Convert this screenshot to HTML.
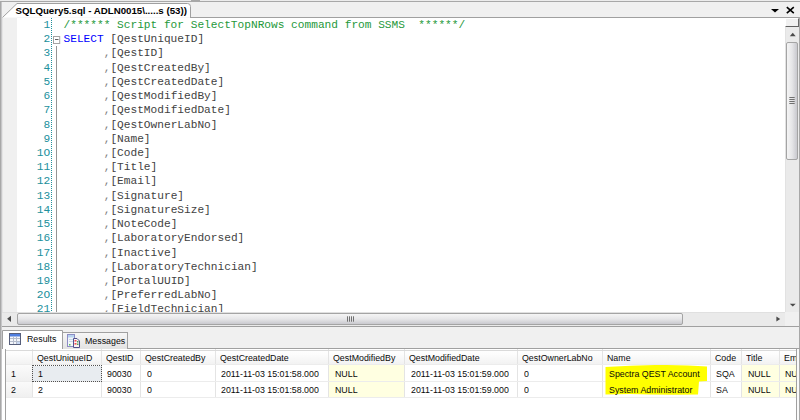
<!DOCTYPE html>
<html><head><meta charset="utf-8">
<style>
*{margin:0;padding:0;box-sizing:border-box}
html,body{width:800px;height:420px;overflow:hidden;background:#f0f0f0;position:relative}
.a{position:absolute}
.ui{font-family:"Liberation Sans",sans-serif}
.mono{font-family:"Liberation Mono",monospace}
#editor{left:2px;top:18px;width:784px;height:294px;background:#fff;overflow:hidden}
#selmargin{left:1px;top:0;width:14px;height:294px;background:#f0f0f0}
.ln{font-family:"Liberation Mono",monospace;position:absolute;left:0;width:48.2px;text-align:right;color:#21909c;font-size:11.17px;white-space:pre}
.code{font-family:"Liberation Mono",monospace;position:absolute;left:61.5px;font-size:11.17px;white-space:pre;color:#424242}
.gt{font-family:"Liberation Sans",sans-serif;font-size:9.6px;line-height:11px;color:#0a0a0a;white-space:pre;transform:scaleX(.92);transform-origin:0 0}
.cm{color:#24983a}.kw{color:#0000ff}.op{color:#808080}
</style></head><body>
<!-- top border -->
<div class="a" style="left:0;top:0;width:800px;height:1px;background:#ececec"></div>
<div class="a" style="left:191px;top:0;width:9px;height:1px;background:#a8a8a8"></div>
<div class="a" style="left:0;top:1px;width:800px;height:1px;background:#a8a8a8"></div>
<!-- left window border -->
<div class="a" style="left:2px;top:348px;width:3px;height:72px;background:#fff"></div>
<div class="a" style="left:797px;top:349px;width:2px;height:71px;background:#fafafa"></div>
<!-- tab strip -->
<svg class="a" style="left:0;top:0" width="800" height="18">
  <path d="M2.5 17.5 L17 3.5 L187.5 3.5 Q190.5 3.5 190.5 6.5 L190.5 17.5" fill="#fff" stroke="#a0a0a0" stroke-width="1"/>
  <line x1="190" y1="17.5" x2="800" y2="17.5" stroke="#a0a0a0" stroke-width="1"/>
  <path d="M771 9 L779 9 L775 12.5 Z" fill="#000"/>
  <path d="M786.8 7.2 L793.8 13.2 M793.8 7.2 L786.8 13.2" stroke="#000" stroke-width="1.6"/>
</svg>
<div class="a ui" style="left:15.5px;top:3.5px;font-size:9.7px;font-weight:bold;color:#000;white-space:pre;line-height:14px">SQLQuery5.sql - ADLN0015\.....s (53))</div>

<div id="editor" class="a">
  <div id="selmargin" class="a"></div>
  <div class="a" style="left:49px;top:0;width:1px;height:294px;background-image:linear-gradient(#21909c 50%,transparent 50%);background-size:1px 2px"></div>
  <svg class="a" style="left:50px;top:17px" width="12" height="12"><rect x="1.5" y="1.5" width="6.2" height="7" fill="#fff" stroke="#a4a4a4"/><line x1="3" y1="4.5" x2="6.5" y2="4.5" stroke="#606060"/></svg>
  <div class="a" style="left:54px;top:28px;width:1px;height:266px;background:#959595"></div>
  <div class="a" style="left:0;top:1px;width:784px;height:294px">
<div class="ln" style="top:0.00px">1</div>
<div class="code" style="top:0.00px"><span class="cm">/****** Script for SelectTopNRows command from SSMS  ******/</span></div>
<div class="ln" style="top:14.22px">2</div>
<div class="code" style="top:14.22px"><span class="kw">SELECT</span> [QestUniqueID]</div>
<div class="ln" style="top:28.44px">3</div>
<div class="code" style="top:28.44px">      <span class="op">,</span>[QestID]</div>
<div class="ln" style="top:42.66px">4</div>
<div class="code" style="top:42.66px">      <span class="op">,</span>[QestCreatedBy]</div>
<div class="ln" style="top:56.88px">5</div>
<div class="code" style="top:56.88px">      <span class="op">,</span>[QestCreatedDate]</div>
<div class="ln" style="top:71.10px">6</div>
<div class="code" style="top:71.10px">      <span class="op">,</span>[QestModifiedBy]</div>
<div class="ln" style="top:85.32px">7</div>
<div class="code" style="top:85.32px">      <span class="op">,</span>[QestModifiedDate]</div>
<div class="ln" style="top:99.54px">8</div>
<div class="code" style="top:99.54px">      <span class="op">,</span>[QestOwnerLabNo]</div>
<div class="ln" style="top:113.76px">9</div>
<div class="code" style="top:113.76px">      <span class="op">,</span>[Name]</div>
<div class="ln" style="top:127.98px">1O</div>
<div class="code" style="top:127.98px">      <span class="op">,</span>[Code]</div>
<div class="ln" style="top:142.20px">11</div>
<div class="code" style="top:142.20px">      <span class="op">,</span>[Title]</div>
<div class="ln" style="top:156.42px">12</div>
<div class="code" style="top:156.42px">      <span class="op">,</span>[Email]</div>
<div class="ln" style="top:170.64px">13</div>
<div class="code" style="top:170.64px">      <span class="op">,</span>[Signature]</div>
<div class="ln" style="top:184.86px">14</div>
<div class="code" style="top:184.86px">      <span class="op">,</span>[SignatureSize]</div>
<div class="ln" style="top:199.08px">15</div>
<div class="code" style="top:199.08px">      <span class="op">,</span>[NoteCode]</div>
<div class="ln" style="top:213.30px">16</div>
<div class="code" style="top:213.30px">      <span class="op">,</span>[LaboratoryEndorsed]</div>
<div class="ln" style="top:227.52px">17</div>
<div class="code" style="top:227.52px">      <span class="op">,</span>[Inactive]</div>
<div class="ln" style="top:241.74px">18</div>
<div class="code" style="top:241.74px">      <span class="op">,</span>[LaboratoryTechnician]</div>
<div class="ln" style="top:255.96px">19</div>
<div class="code" style="top:255.96px">      <span class="op">,</span>[PortalUUID]</div>
<div class="ln" style="top:270.18px">2O</div>
<div class="code" style="top:270.18px">      <span class="op">,</span>[PreferredLabNo]</div>
<div class="ln" style="top:284.40px">21</div>
<div class="code" style="top:284.40px">      <span class="op">,</span>[FieldTechnician]</div>
  </div>
</div>


<!-- right border -->
<div class="a" style="left:799px;top:17px;width:1px;height:403px;background:#a8a8a8"></div>
<!-- vertical scrollbar -->
<div class="a" style="left:785px;top:18px;width:14px;height:294px;background:#eaeaea;border-left:1px solid #e2e2e2"></div>
<div class="a" style="left:785px;top:18px;width:14px;height:9px;background:#f0f0f0;border-top:1px solid #fff;border-left:1px solid #fff;border-right:1px solid #686868;border-bottom:1px solid #606060"></div>
<svg class="a" style="left:785px;top:27px" width="14" height="285">
  <path d="M4.8 9.2 L10.7 9.2 L7.75 5.8 Z" fill="#4a4a4a"/>
  <rect x="1.5" y="15.5" width="11" height="117" rx="1.5" fill="url(#vth)" stroke="#a4a4a4"/>
  <path d="M4.3 70.5 H9.7 M4.3 72.5 H9.7 M4.3 74.5 H9.7 M4.3 76.5 H9.7" stroke="#707070" stroke-width="1"/>
  <path d="M4.8 276.7 L10.7 276.7 L7.75 279.4 Z" fill="#4a4a4a"/>
  <defs><linearGradient id="vth" x1="0" x2="1" y1="0" y2="0"><stop offset="0" stop-color="#f6f6f6"/><stop offset="0.5" stop-color="#e6e6e8"/><stop offset="1" stop-color="#c6c6cc"/></linearGradient>
  <linearGradient id="hth" x1="0" x2="0" y1="0" y2="1"><stop offset="0" stop-color="#f6f6f6"/><stop offset="0.5" stop-color="#e6e6e8"/><stop offset="1" stop-color="#c6c6cc"/></linearGradient>
  <linearGradient id="msg" x1="0" x2="0" y1="0" y2="1"><stop offset="0" stop-color="#f7f7f7"/><stop offset="1" stop-color="#e2e2e2"/></linearGradient></defs>
</svg>
<!-- horizontal scrollbar -->
<div class="a" style="left:2px;top:312px;width:783px;height:14px;background:#eaeaea;border-top:1px solid #e0e0e0"></div>
<svg class="a" style="left:2px;top:312px" width="783" height="14">
  <path d="M5.1 6.8 L9 3.7 L9 9.9 Z" fill="#4a4a4a"/>
  <rect x="15.5" y="1.5" width="665" height="11" rx="1.5" fill="url(#hth)" stroke="#a4a4a4"/>
  <path d="M345.5 4.3 V9.7 M347.5 4.3 V9.7 M349.5 4.3 V9.7 M351.5 4.3 V9.7" stroke="#707070"/>
  <path d="M778.2 7.1 L774.4 4.6 L774.4 9.6 Z" fill="#4a4a4a"/>
</svg>
<div class="a" style="left:785px;top:312px;width:14px;height:14px;background:#f0f0f0"></div>
<div class="a" style="left:2px;top:326px;width:797px;height:1px;background:#a0a0a0"></div>

<!-- results tabs -->
<svg class="a" style="left:0;top:326px" width="800" height="94">
  <rect x="62.5" y="6.5" width="65" height="17" fill="url(#msg)" stroke="#a0a0a0"/>
  <path d="M2.5 23 V4.5 H62.5 V23" fill="#fff" stroke="#a0a0a0"/>
  <line x1="127" y1="22.5" x2="800" y2="22.5" stroke="#a0a0a0"/>
</svg>
<svg class="a" style="left:9px;top:333px" width="13" height="13">
  <rect x="0.5" y="0.5" width="11" height="11" fill="#f4f6fa" stroke="#565e7a"/>
  <rect x="1" y="1" width="10" height="2.5" fill="#4f7fe0"/>
  <path d="M1 5.5 H11 M1 8.5 H11 M4.5 3.5 V11 M7.5 3.5 V11" stroke="#b4bccc" stroke-width="1"/>
  <rect x="8" y="9" width="3" height="2" fill="#c8d8f4"/>
</svg>
<div class="a gt" style="left:26.5px;top:333px">Results</div>
<svg class="a" style="left:66px;top:333px" width="14" height="15">
  <rect x="1.5" y="1.5" width="7" height="12" fill="#f2f6fb" stroke="#8c8cc4"/>
  <rect x="2" y="2" width="6" height="2.5" fill="#b8d4f0"/>
  <path d="M3 6.5 H7 M3 8.5 H7" stroke="#c8d8e8"/>
  <rect x="3" y="11" width="1.5" height="1.5" fill="#60c060"/>
  <path d="M7.5 5.5 H11 L13.5 8 V14.5 H7.5 Z" fill="#faf4f4" stroke="#50508c"/>
  <rect x="8.5" y="7" width="2" height="1.6" fill="#f05050"/><rect x="8.5" y="10" width="2" height="1.6" fill="#f05050"/>
  <rect x="11" y="8" width="1.5" height="1.5" fill="#50a060"/><rect x="11" y="10.5" width="1.5" height="1.5" fill="#50a060"/>
</svg>
<div class="a gt" style="left:84.5px;top:335px">Messages</div>

<div class="a" style="left:0;top:2px;width:2px;height:418px;background:linear-gradient(90deg,#a8a8a8 0,#a8a8a8 1px,#c6c6c8 1px,#c6c6c8 2px)"></div>
<div class="a" style="left:2px;top:18px;width:1px;height:294px;background:#e4e4e4"></div>
<!-- grid -->
<div class="a" style="left:5px;top:349px;width:792px;height:71px;background:#fff;border-left:1px solid #a0a0a0;border-right:1px solid #a0a0a0;overflow:hidden">
<div class="a" style="left:0;top:0;width:800px;height:15.5px;background:linear-gradient(#ffffff,#fdfdfd 30%,#f1f1f1)"></div>
<div class="a" style="left:0;top:15.5px;width:26px;height:16.5px;background:linear-gradient(#fbfbfb,#f0f0f0)"></div>
<div class="a" style="left:0;top:32.0px;width:26px;height:16.0px;background:linear-gradient(#fbfbfb,#f0f0f0)"></div>
<div class="a" style="left:322.75px;top:15.5px;width:75.75px;height:16.5px;background:#ffffe1"></div>
<div class="a" style="left:322.75px;top:32.0px;width:75.75px;height:16.0px;background:#ffffe1"></div>
<div class="a" style="left:735.5px;top:15.5px;width:37.5px;height:16.5px;background:#ffffe1"></div>
<div class="a" style="left:735.5px;top:32.0px;width:37.5px;height:16.0px;background:#ffffe1"></div>
<div class="a" style="left:773px;top:15.5px;width:51px;height:16.5px;background:#ffffe1"></div>
<div class="a" style="left:773px;top:32.0px;width:51px;height:16.0px;background:#ffffe1"></div>
<div class="a" style="left:26.5px;top:16.5px;width:69.5px;height:16.0px;background:#e8ecf0"></div>
<div class="a" style="left:94.8px;top:0;width:1px;height:48.0px;background:#e4e4e4"></div>
<div class="a" style="left:134.2px;top:0;width:1px;height:48.0px;background:#e4e4e4"></div>
<div class="a" style="left:208.5px;top:0;width:1px;height:48.0px;background:#e4e4e4"></div>
<div class="a" style="left:322.25px;top:0;width:1px;height:48.0px;background:#e4e4e4"></div>
<div class="a" style="left:398.0px;top:0;width:1px;height:48.0px;background:#e4e4e4"></div>
<div class="a" style="left:511.0px;top:0;width:1px;height:48.0px;background:#e4e4e4"></div>
<div class="a" style="left:596.1px;top:0;width:1px;height:48.0px;background:#e4e4e4"></div>
<div class="a" style="left:703.5px;top:0;width:1px;height:48.0px;background:#e4e4e4"></div>
<div class="a" style="left:735.0px;top:0;width:1px;height:48.0px;background:#e4e4e4"></div>
<div class="a" style="left:772.5px;top:0;width:1px;height:48.0px;background:#e4e4e4"></div>
<div class="a" style="left:823.5px;top:0;width:1px;height:48.0px;background:#e4e4e4"></div>
<div class="a" style="left:25.5px;top:0;width:1px;height:48.0px;background:#e4e4e4"></div>
<div class="a" style="left:0;top:15.0px;width:800px;height:1px;background:#ececec"></div>
<div class="a" style="left:0;top:31.5px;width:800px;height:1px;background:#ececec"></div>
<div class="a" style="left:0;top:47.5px;width:800px;height:1px;background:#ececec"></div>
<div class="a" style="left:26px;top:16px;width:70px;height:17px;border:1px dotted #505050"></div>
<div class="a" style="left:0;top:1px;width:800px;height:1px;background:#dadada"></div>
<svg class="a" style="left:594px;top:13px" width="112" height="36"><path d="M5.5 5 Q30 3.5 55 3 Q85 2.5 107 4.5 L107 19 L99 19.5 L98 32.5 Q60 33 30 32 L5.5 32.5 Z" fill="#ffff00"/></svg>
<div class="a gt" style="left:30.5px;top:2.5px">QestUniqueID</div>
<div class="a gt" style="left:32px;top:18.5px">1</div>
<div class="a gt" style="left:32px;top:35.0px">2</div>
<div class="a gt" style="left:99.8px;top:2.5px">QestID</div>
<div class="a gt" style="left:101.3px;top:18.5px">90030</div>
<div class="a gt" style="left:101.3px;top:35.0px">90030</div>
<div class="a gt" style="left:139.2px;top:2.5px">QestCreatedBy</div>
<div class="a gt" style="left:140.7px;top:18.5px">0</div>
<div class="a gt" style="left:140.7px;top:35.0px">0</div>
<div class="a gt" style="left:213.5px;top:2.5px">QestCreatedDate</div>
<div class="a gt" style="left:215px;top:18.5px">2011-11-03 15:01:58.000</div>
<div class="a gt" style="left:215px;top:35.0px">2011-11-03 15:01:58.000</div>
<div class="a gt" style="left:327.25px;top:2.5px">QestModifiedBy</div>
<div class="a gt" style="left:328.75px;top:18.5px">NULL</div>
<div class="a gt" style="left:328.75px;top:35.0px">NULL</div>
<div class="a gt" style="left:403.0px;top:2.5px">QestModifiedDate</div>
<div class="a gt" style="left:404.5px;top:18.5px">2011-11-03 15:01:59.000</div>
<div class="a gt" style="left:404.5px;top:35.0px">2011-11-03 15:01:59.000</div>
<div class="a gt" style="left:516.0px;top:2.5px">QestOwnerLabNo</div>
<div class="a gt" style="left:517.5px;top:18.5px">0</div>
<div class="a gt" style="left:517.5px;top:35.0px">0</div>
<div class="a gt" style="left:601.1px;top:2.5px">Name</div>
<div class="a gt" style="left:602.6px;top:18.5px">Spectra QEST Account</div>
<div class="a gt" style="left:602.6px;top:35.0px">System Administrator</div>
<div class="a gt" style="left:708.5px;top:2.5px">Code</div>
<div class="a gt" style="left:710px;top:18.5px">SQA</div>
<div class="a gt" style="left:710px;top:35.0px">SA</div>
<div class="a gt" style="left:740.0px;top:2.5px">Title</div>
<div class="a gt" style="left:741.5px;top:18.5px">NULL</div>
<div class="a gt" style="left:741.5px;top:35.0px">NULL</div>
<div class="a gt" style="left:777.5px;top:2.5px">Email</div>
<div class="a gt" style="left:779px;top:18.5px">NULL</div>
<div class="a gt" style="left:779px;top:35.0px">NULL</div>
<div class="a gt" style="left:5px;top:18.5px">1</div>
<div class="a gt" style="left:5px;top:35.0px">2</div>
</div>
</body></html>
